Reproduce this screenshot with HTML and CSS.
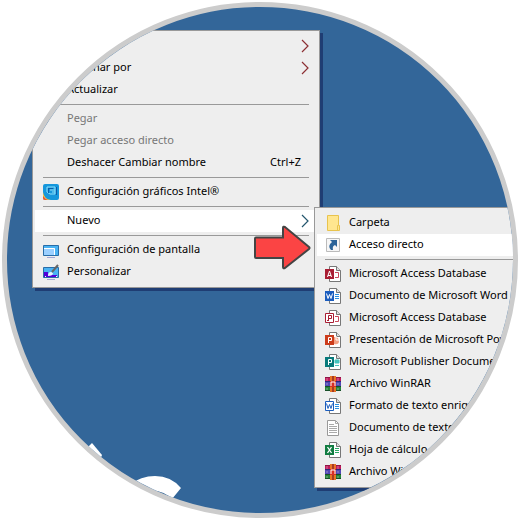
FILE: index.html
```html
<!DOCTYPE html>
<html lang="es">
<head>
  <meta charset="UTF-8">
  <title>Escritorio - Nuevo acceso directo</title>
  <link rel="stylesheet" href="styles.css">
</head>
<body>
  <!-- Shared icon shapes -->
  <svg class="sprite" aria-hidden="true">
    <symbol id="chevron" viewBox="0 0 8 14">
      <path d="M1 1l6 6-6 6" fill="none" stroke="currentColor" stroke-width="1.2"/>
    </symbol>
    <symbol id="page" viewBox="0 0 16 16">
      <path d="M4.500.5h7l4 4v11h-11z" fill="#fff" stroke="#777"/>
      <path d="M11.500.5v4h4" fill="#ddd" stroke="#777"/>
    </symbol>
    <symbol id="rar" viewBox="0 0 16 16">
      <path d="M0 1h16v4H0z" fill="#c2185b"/>
      <path d="M0 1h16v1H0z" fill="#8d1745"/>
      <path d="M0 5h16v5H0z" fill="#5147b5"/>
      <path d="M0 5h16v1H0z" fill="#2c2877"/>
      <path d="M0 10h16v5H0z" fill="#25843a"/>
      <path d="M0 10h16v1H0zM0 14h16v1H0z" fill="#174f28"/>
      <path d="M5 0h6v16H5z" fill="#e87524"/>
      <path d="M7 0h2v16H7z" fill="#a83a24"/>
      <path d="M5 5h6v6H5z" fill="#d92f24"/>
      <path d="M6 10V6h4v4" fill="none" stroke="#fff"/>
      <path d="M2 2v3M13 2v3M2 7v2M13 7v2M2 12v2M13 12v2" stroke="#ddd" stroke-opacity=".5"/>
    </symbol>
  </svg>

  <main class="desktop">
    <svg class="wallpaper" viewBox="0 0 506 506" aria-hidden="true">
      <path d="M85 436l10 12-4 10-16-12z" fill="#fff"/>
      <path d="M122 478q12-9 26-9 16 0 26 12l-9 11q-8-8-18-8l6 10-35-8z" fill="#fff"/>
    </svg>

    <ul class="menu menu-main" role="menu">
      <li><button class="item" role="menuitem"><span class="icon"></span><span class="label">Ver</span><svg class="arrow warm"><use href="#chevron"/></svg></button></li>
      <li><button class="item" role="menuitem"><span class="icon"></span><span class="label">Ordenar por</span><svg class="arrow warm"><use href="#chevron"/></svg></button></li>
      <li><button class="item" role="menuitem"><span class="icon"></span><span class="label">Actualizar</span></button></li>
      <li class="separator" role="separator"></li>
      <li><button class="item" role="menuitem" disabled><span class="icon"></span><span class="label">Pegar</span></button></li>
      <li><button class="item" role="menuitem" disabled><span class="icon"></span><span class="label">Pegar acceso directo</span></button></li>
      <li><button class="item" role="menuitem"><span class="icon"></span><span class="label">Deshacer Cambiar nombre</span><span class="shortcut">Ctrl+Z</span></button></li>
      <li class="separator" role="separator"></li>
      <li>
        <button class="item" role="menuitem">
          <svg class="icon" viewBox="0 0 16 16">
            <rect width="16" height="16" rx="2" fill="#1597dc"/>
            <path d="M0 8q1 7 8 8H2q-2 0-2-2z" fill="#f6c744"/>
            <path d="M0 12q2 3 5 4H2q-2 0-2-2z" fill="#e5533d"/>
            <path d="M4 3h8v7H7L4 8zM7 6h5M9 8h3" fill="none" stroke="#8fe0fa"/>
            <path d="M5 4.500h5M5.500 5v4M13.500 3v8" stroke="#0a5ca8"/>
          </svg>
          <span class="label">Configuración gráficos Intel®</span>
        </button>
      </li>
      <li class="separator" role="separator"></li>
      <li><button class="item selected" role="menuitem" aria-haspopup="true" aria-expanded="true"><span class="icon"></span><span class="label">Nuevo</span><svg class="arrow cool"><use href="#chevron"/></svg></button></li>
      <li class="separator" role="separator"></li>
      <li>
        <button class="item" role="menuitem">
          <svg class="icon" viewBox="0 0 16 16">
            <path d="M.5 3.500h15v10H.5z" fill="#49b2f3" stroke="#286da8"/>
            <path d="M1 6h11v7H1z" fill="#9bd0ff"/>
            <path d="M1 6.500h10.500V13" fill="none" stroke="#fff"/>
            <path d="M4 15.500h8" stroke="#a3a7d4"/>
          </svg>
          <span class="label">Configuración de pantalla</span>
        </button>
      </li>
      <li>
        <button class="item" role="menuitem">
          <svg class="icon" viewBox="0 0 16 16">
            <path d="M.5 3.500h15v10H.5z" fill="#49b2f3" stroke="#286da8"/>
            <path d="M1 8h4v3h9v2H1z" fill="#5200d8"/>
            <path d="M2 12.500h1M13 12.500h1" stroke="#fff"/>
            <path d="M5 12q0-4 3-4l2 1q0 3-5 3z" fill="#e8f4ff"/>
            <path d="M9 8l6-7" stroke="#666" stroke-width="2"/>
            <path d="M4 15.500h8" stroke="#a3a7d4"/>
          </svg>
          <span class="label">Personalizar</span>
        </button>
      </li>
    </ul>

    <ul class="menu menu-new" role="menu" aria-label="Nuevo">
      <li>
        <button class="item" role="menuitem">
          <svg class="icon" viewBox="0 0 16 16">
            <path d="M2.500.5h11v10h1v5h-12z" fill="#ffe68f" stroke="#e8c34d"/>
            <path d="M12.500 15v-4.500h1" fill="none" stroke="#e8c34d"/>
          </svg>
          <span class="label">Carpeta</span>
        </button>
      </li>
      <li>
        <button class="item selected" role="menuitem">
          <svg class="icon" viewBox="0 0 16 16">
            <path d="M1.500 1.500h13v13h-13z" fill="#f6f6f6" stroke="#bbb"/>
            <path d="M5 3h7v7l-2-2q-3 1-2 5H6q-4-4 1-8z" fill="#2c6499"/>
          </svg>
          <span class="label">Acceso directo</span>
        </button>
      </li>
      <li class="separator" role="separator"></li>
      <li>
        <button class="item" role="menuitem">
          <svg class="icon" viewBox="0 0 16 16">
            <use href="#page"/>
            <path d="M10 6.500h3.500v5H10" fill="none" stroke="#c8485a"/>
            <path d="M0 3h9v10H0z" fill="#a91d33"/>
            <path d="M2.500 11l2-6 2 6M3 9.500h3" fill="none" stroke="#fff"/>
          </svg>
          <span class="label">Microsoft Access Database</span>
        </button>
      </li>
      <li>
        <button class="item" role="menuitem">
          <svg class="icon" viewBox="0 0 16 16">
            <use href="#page"/>
            <path d="M10 6.500h4M10 8.500h4M10 10.500h4" stroke="#2b8fe0"/>
            <path d="M0 3h9v10H0z" fill="#1b5dbe"/>
            <path d="M1.500 5.500l1.500 5 1.500-4 1.500 4 1.500-5" fill="none" stroke="#fff"/>
          </svg>
          <span class="label">Documento de Microsoft Word</span>
        </button>
      </li>
      <li>
        <button class="item" role="menuitem">
          <svg class="icon" viewBox="0 0 16 16">
            <use href="#page"/>
            <path d="M10 6.500h3.500v5H10" fill="none" stroke="#c8485a"/>
            <path d="M.5 3.500h8v9h-8z" fill="#fff" stroke="#a91d33"/>
            <path d="M3.500 11V5.500h3v3h-3M2 10.500h2" fill="none" stroke="#a91d33"/>
          </svg>
          <span class="label">Microsoft Access Database</span>
        </button>
      </li>
      <li>
        <button class="item" role="menuitem">
          <svg class="icon" viewBox="0 0 16 16">
            <use href="#page"/>
            <path d="M9 5q5 0 5 4t-5 3z" fill="#f3a184"/>
            <path d="M11 4v4h4" fill="none" stroke="#fff"/>
            <path d="M0 3h9v10H0z" fill="#cc3c1b"/>
            <path d="M3.500 11V5.500h3v3h-3" fill="none" stroke="#fff"/>
          </svg>
          <span class="label">Presentación de Microsoft PowerPoint</span>
        </button>
      </li>
      <li>
        <button class="item" role="menuitem">
          <svg class="icon" viewBox="0 0 16 16">
            <use href="#page"/>
            <path d="M10 6h4v3h-4zM10 11.500h4" fill="#45c3bd" stroke="#45c3bd"/>
            <path d="M0 3h9v10H0z" fill="#087a7b"/>
            <path d="M3.500 11V5.500h3v3h-3" fill="none" stroke="#fff"/>
          </svg>
          <span class="label">Microsoft Publisher Document</span>
        </button>
      </li>
      <li><button class="item" role="menuitem"><svg class="icon"><use href="#rar"/></svg><span class="label">Archivo WinRAR</span></button></li>
      <li>
        <button class="item" role="menuitem">
          <svg class="icon" viewBox="0 0 16 16">
            <use href="#page"/>
            <path d="M10 6.500h4M10 8.500h4M10 10.500h4" stroke="#2b8fe0"/>
            <path d="M.5 3.500h8v9h-8z" fill="#fff" stroke="#1b5dbe"/>
            <path d="M1.500 5.500l1.500 5 1.500-4 1.500 4 1.500-5" fill="none" stroke="#1b5dbe"/>
          </svg>
          <span class="label">Formato de texto enriquecido</span>
        </button>
      </li>
      <li>
        <button class="item" role="menuitem">
          <svg class="icon" viewBox="0 0 16 16">
            <path d="M2.500.5h8l3 3v12h-11z" fill="#fff" stroke="#999"/>
            <path d="M10.500.5v3h3M4 4.500h5M4 6.500h8M4 8.500h8M4 10.500h8M4 12.500h8" fill="none" stroke="#aaa"/>
          </svg>
          <span class="label">Documento de texto</span>
        </button>
      </li>
      <li>
        <button class="item" role="menuitem">
          <svg class="icon" viewBox="0 0 16 16">
            <use href="#page"/>
            <path d="M10 6.500h4M10 8.500h4M10 10.500h4" stroke="#2da866"/>
            <path d="M0 3h9v10H0z" fill="#107c41"/>
            <path d="M2.500 5l4 6M6.500 5l-4 6" stroke="#fff" stroke-width="1.300"/>
          </svg>
          <span class="label">Hoja de cálculo de Microsoft Excel</span>
        </button>
      </li>
      <li><button class="item" role="menuitem"><svg class="icon"><use href="#rar"/></svg><span class="label">Archivo WinRAR ZIP</span></button></li>
    </ul>

    <svg class="pointer" viewBox="0 0 60 48" aria-hidden="true">
      <path d="M3 13.500h27V4q0-2 2-1l24 20q1 1 0 2L32 44q-2 1-2-1v-9H3q-1 0-1-1V14.500q0-1 1-1z" fill="#fb4444" stroke="#444" stroke-width="2"/>
    </svg>
  </main>
</body>
</html>
```

FILE: styles.css
```css
* {
  box-sizing: border-box;
}
body {
  margin: 0;
  padding: 2px;
  background: #fff;
  color: #000;
  font-family: "Noto Sans", "Segoe UI", sans-serif;
  font-size: 11px;
}
.sprite {
  position: absolute;
  width: 0;
  height: 0;
}

/* --- Desktop seen through a round frame --- */
.desktop {
  position: relative;
  width: 100%;
  aspect-ratio: 1;
  border: 5px solid #ccc;
  border-radius: 50%;
  background: #336699;
  overflow: hidden;
}
.wallpaper {
  display: block;
  width: 100%;
}

/* --- Context menus --- */
.menu {
  position: absolute;
  margin: 0;
  padding: 4px 2px;
  list-style: none;
  background: #eee;
  border: 1px solid #999;
  box-shadow: 3px 3px 0 #1f3d73;
}
.menu-main {
  left: 25px;
  top: 23px;
  width: 288px;
}
.menu-new {
  left: 307px;
  top: 200px;
  width: 288px;
}
.item {
  display: flex;
  align-items: center;
  gap: 8px;
  width: 100%;
  height: 22px;
  padding: 0 8px;
  border: 0;
  background: none;
  color: inherit;
  font: inherit;
  line-height: 16px;
  text-align: left;
  white-space: nowrap;
}
.item:disabled {
  color: #777;
}
.item.selected {
  background: #fff;
}
.icon {
  flex: none;
  width: 16px;
  height: 16px;
}
.label,
.shortcut {
  padding-bottom: 2px;
}
.label {
  flex: 1;
}
.shortcut {
  margin-right: 8px;
}
.arrow {
  flex: none;
  width: 8px;
  height: 14px;
}
.warm {
  color: #8c2f33;
}
.cool {
  color: #24566e;
}
.separator {
  height: 7px;
  padding: 3px 8px;
}
.separator::before {
  content: "";
  display: block;
  height: 1px;
  background: #999;
}

/* --- Red arrow over the menus --- */
.pointer {
  position: absolute;
  left: 246px;
  top: 217px;
  width: 60px;
  height: 48px;
}
```
